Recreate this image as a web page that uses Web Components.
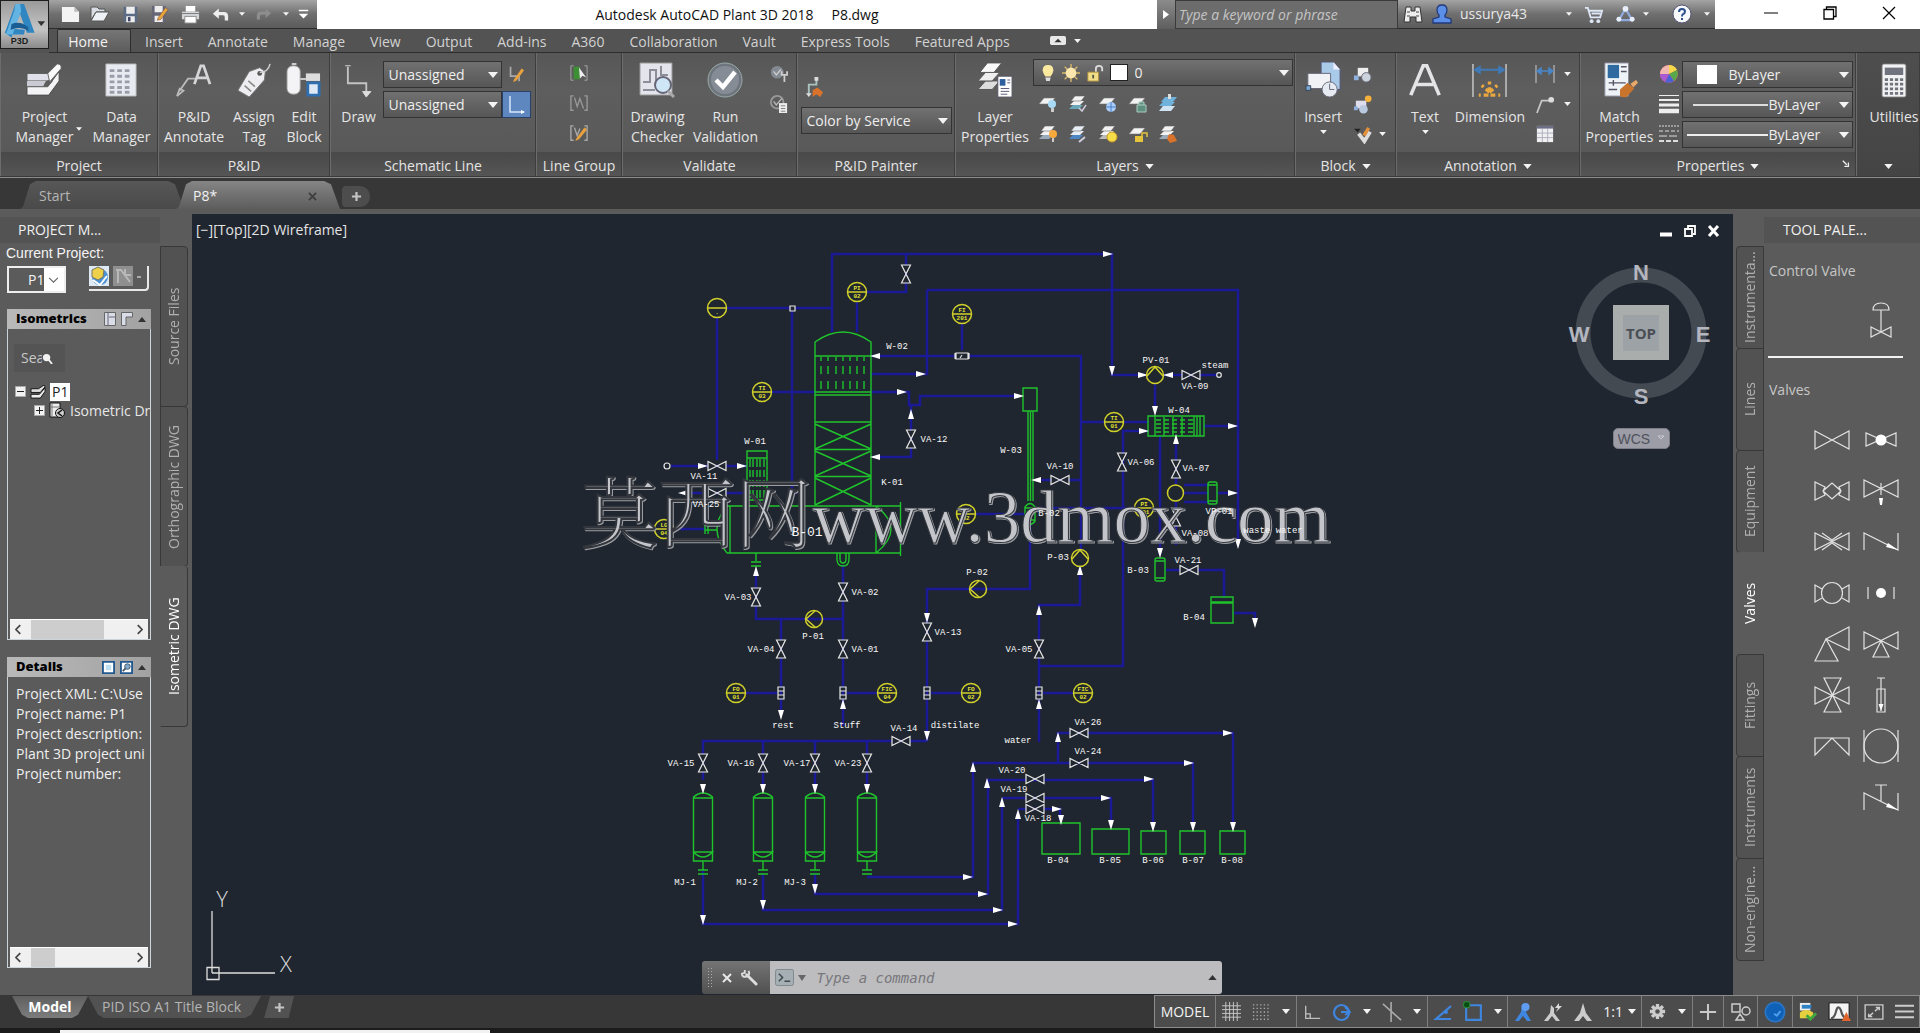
<!DOCTYPE html>
<html lang="en">
<head>
<meta charset="utf-8">
<title>Autodesk AutoCAD Plant 3D 2018 - P8.dwg</title>
<style>
html,body{margin:0;height:100%;overflow:hidden}
body{background:#5b5b5b;color:#e8e8e8;font:14px/20px "Open Sans","Noto Sans",sans-serif}
</style>
</head>
<body>
<cad-app></cad-app>
<script>
/* ---------- icon library ---------- */
const LAYER = (c = '#f2f2f2', d = '#9ab') => `<path d="M5 12h10l-4 4H1z" fill="${d}"/><path d="M6 8h10l-4 4H2z" fill="${c}"/><path d="M7 3h10l-4 5H3z" fill="${c}" stroke="#666" stroke-width=".6"/>`;
const SHEET = `<path d="M6 5h11l-5 6H1z" fill="#f2f2f2" stroke="#777" stroke-width=".6"/>`;
const ICONS = {
  logo: ['0 0 49 49', `<path d="M4 33 15 3h9l11 30h-8l-8-22-7 18 13 1-1 5H12l-1 3z" fill="#2f86c0"/><path d="m15 3 5 0 1 8-9 24H5l9-25z" fill="#63b4e2"/><path d="M11 24q9-4 17 3l1 4q-9-5-19-1z" fill="#1a5d94"/><path d="M38 21h8l-4 5z" fill="#333"/>`],
  new: ['0 0 20 20', `<path d="M1 2h13l5 5v11H1z" fill="#f4f4f4"/><path d="M14 2v5h5z" fill="#bbb"/>`],
  open: ['0 0 20 20', `<path d="M1 16V3h6l2 2h6v3H6z" fill="#d8dde3" stroke="#555"/><path d="m1 17 5-9h13l-5 9z" fill="#eef1f5" stroke="#555"/>`],
  save: ['0 0 20 20', `<path d="M2 1h16v18H2z" fill="#5b6b84"/><path d="M5 1h10v8H5zM5 12h10v7H5z" fill="#eee"/><path d="M7 13h3v5H7z" fill="#446"/>`],
  saveas: ['0 0 20 20', `<path d="M1 1h15v18H1z" fill="#667"/><path d="M4 1h9v7H4zM4 12h9v7H4z" fill="#eee"/><path d="m8 14 8-11 3 2-8 11-4 1z" fill="#e8a73a" stroke="#744" stroke-width=".6"/>`],
  print: ['0 0 20 20', `<path d="M5 1h10v6H5z" fill="#fff"/><path d="M1 7h18v8H1z" fill="#d4d7da"/><path d="M4 12h12v7H4z" fill="#fff" stroke="#888"/><path d="M1 9h18" stroke="#777"/>`],
  undo: ['0 0 20 20', `<path d="m1 9 7-6v4h6q5 0 5 5v5h-4v-4q0-2-2-2H8v4z" fill="#eee"/>`],
  redo: ['0 0 20 20', `<path d="m19 9-7-6v4H6q-5 0-5 5v5h4v-4q0-2 2-2h5v4z" fill="#8d8d8d"/>`],
  caret: ['0 0 10 6', `<path d="M0 0h10L5 6z" fill="#f4f4f4"/>`],
  custom: ['0 0 14 14', `<path d="M1 1h12v2H1zM1 6h12l-6 6z" fill="#fff"/>`],
  right: ['0 0 8 12', `<path d="m0 0 8 6-8 6z" fill="#fff"/>`],
  bino: ['0 0 20 20', `<path d="M3 3h5v4h4V3h5l2 15h-6v-5H7v5H1z" fill="#eee" stroke="#333"/><path d="M4 8h3M13 8h3M4 12h3M13 12h3" stroke="#444"/>`],
  user: ['0 0 20 20', `<path d="M10 1q5 0 5 5 0 3-2 5v2l6 2v4H1v-4l6-2v-2q-2-2-2-5 0-5 5-5z" fill="#5b8fe8" stroke="#223a7a" stroke-width="1.3"/>`],
  cart: ['0 0 20 20', `<path d="M1 3h3l3 10h10l2-7H5M8 9h9" fill="none" stroke="#dde6f5" stroke-width="2"/><circle cx="8" cy="17" r="2" fill="#dde6f5"/><circle cx="15" cy="17" r="2" fill="#dde6f5"/>`],
  a360: ['0 0 20 20', `<path d="M10 4 3 16h14z" fill="none" stroke="#8fa9dd" stroke-width="2.4"/><circle cx="10" cy="4" r="3" fill="#e8eefc"/><circle cx="3" cy="15" r="2.6" fill="#e8eefc"/><circle cx="17" cy="15" r="2.6" fill="#e8eefc"/>`],
  help: ['0 0 20 20', `<circle cx="10" cy="10" r="9" fill="#f6f8fb" stroke="#557"/><path d="M7 8q0-3 3-3t3 2.600q0 1.700-2 2.600-1 .5-1 2.300M10 14v2" fill="none" stroke="#2d4f8e" stroke-width="2"/>`],
  min: ['0 0 14 14', `<path d="M0 7h14" stroke="#000"/>`],
  max: ['0 0 14 14', `<path d="M1 3.500h9.500v9.500H1zM3.500 3V1H13v9.500h-2" fill="none" stroke="#000" stroke-width="1.300"/>`],
  close: ['0 0 14 14', `<path d="m1 1 12 12M13 1 1 13" stroke="#000" stroke-width="1.200"/>`],
  pill: ['0 0 18 10', `<rect width="18" height="10" rx="2" fill="#e8e8e8"/><path d="m5 7 4-4 4 4z" fill="#333"/>`],
  project: ['0 0 40 36', `<path d="M2 25h22l12-16v10L25 34H2z" fill="#f3f3f6" stroke="#4a4a4a"/><path d="M2 11h22q4 0 4 4-1 4-5 4H2z" fill="#dfe0ea" stroke="#555"/><path d="M24 11 34 1q5 0 4 5L26 20z" fill="#fafafa" stroke="#666"/><path d="M2 19h20l-3 6H2z" fill="#c9cad4"/><path d="M2 25h22l5-6" fill="none" stroke="#666"/>`],
  data: ['0 0 34 36', `<path d="M1 1h32v34H1z" fill="#e8eaf2" stroke="#bbb"/><path d="M5 8h24M5 14h24M5 20h24M5 26h24M5 31h24" stroke="#9a9ca8" stroke-width="3" stroke-dasharray="5 3"/>`],
  annotate: ['0 0 40 36', `<path d="M2 35 5 27l4 2zM5 29l9-13h8" fill="none" stroke="#bbb" stroke-width="2"/><path d="m21 22 7-20h3l7 20M24 15h11" fill="none" stroke="#d5d5d8" stroke-width="3"/>`],
  tag: ['0 0 38 36', `<path d="M14 9 25 5l6 4-1 9-16 18L2 29z" fill="#eeeef2" stroke="#777"/><circle cx="25" cy="11" r="2.500" fill="#555"/><path d="M25 10q9 0 11-9" fill="none" stroke="#ccc" stroke-width="1.600"/><path d="m9 24 7 6M13 19l7 6" stroke="#888" stroke-width="1.600"/>`],
  block: ['0 0 38 36', `<rect x="1" y="3" width="14" height="30" rx="6" fill="#f4f4f6" stroke="#999"/><path d="M6 1h5M15 17h6" stroke="#ccc" stroke-width="2"/><path d="M21 11h15v8H21z" fill="#ddd"/><path d="M23 21h12v13H23z" fill="#dfe8f5" stroke="#2f6fb0" stroke-width="3"/>`],
  draw: ['0 0 30 38', `<path d="M4 4v18h20v11" fill="none" stroke="#c4c4c4" stroke-width="2"/><path d="M1 3h6M20 31h9l-5 6z" stroke="#ddd" stroke-width="1" fill="#ddd"/>`],
  pencilLine: ['0 0 20 20', `<path d="M3 1v11h10v6" stroke="#aaa" fill="none" stroke-width="2"/><path d="m7 16 9-13 3 2-9 12-4 2z" fill="#e9a13d"/>`],
  ell: ['0 0 22 22', `<path d="M5 2v16h14" stroke="#d7e6fb" stroke-width="1.500" fill="none"/><path d="m16 16 4 2-4 2z" fill="#fff"/>`],
  grp1: ['0 0 20 20', `<path d="M4 2H1v16h3M16 2h3v16h-3" stroke="#aaa" fill="none"/><path d="M4 3h7v14H4z" fill="#3c8f34"/><path d="m10 4 1 12 3-3 4 2z" fill="#eee"/>`],
  grp2: ['0 0 20 20', `<path d="M4 2H1v16h3M16 2h3v16h-3M5 4l3 10 3-9 4 11" stroke="#999" fill="none" stroke-width="1.500"/>`],
  grp3: ['0 0 20 20', `<path d="M4 2H1v16h3M16 2h3v16h-3M5 4l3 9 3-8" stroke="#aaa" fill="none" stroke-width="1.500"/><path d="m7 16 9-12 3 2-9 11-4 2z" fill="#e9a13d"/>`],
  checker: ['0 0 36 36', `<path d="M1 1h32v32H1z" fill="#e4e5ec" stroke="#999"/><path d="M4 20h7V8h6v18M22 4v9h7M4 28h12" fill="none" stroke="#8c8e9a" stroke-width="2"/><circle cx="24" cy="23" r="8" fill="#cfe6f7" stroke="#667" stroke-width="2"/><path d="m29 29 6 6" stroke="#aaa" stroke-width="3"/>`],
  run: ['0 0 36 36', `<circle cx="18" cy="18" r="17" fill="#6f757c" stroke="#9aa"/><circle cx="18" cy="18" r="14" fill="#858c96"/><path d="m9 18 7 7L28 10" fill="none" stroke="#fff" stroke-width="4.500"/>`],
  valset: ['0 0 20 20', `<circle cx="8" cy="8" r="7" fill="#848a92"/><path d="m4 7 3 4 5-6" stroke="#ccc" fill="none" stroke-width="1.500"/><path d="M16 11v8M13 7v4h6V7" stroke="#ccc" stroke-width="2" fill="none"/>`],
  vallist: ['0 0 20 20', `<circle cx="8" cy="8" r="7" fill="none" stroke="#999" stroke-width="2"/><path d="m4 7 3 4 6-7" stroke="#bbb" fill="none" stroke-width="1.500"/><path d="M10 9h9v11h-9z" fill="#eee"/><path d="M12 12h5M12 15h5M12 18h5" stroke="#777"/>`],
  painter: ['0 0 20 22', `<path d="M12 1v7H4v10" fill="none" stroke="#a9c4bd" stroke-width="2"/><path d="M10 0h4v4h-4zM1 17h6l-3 4z" fill="#ddd"/><path d="m8 14 5-3 6 5-3 5-4-3-4 3z" fill="#d9732c"/>`],
  layerprops: ['0 0 38 38', `<path d="M9 20h15l-8 9H1z" fill="#ddd" stroke="#555"/><path d="M9 11h15l-8 9H1z" fill="#eee" stroke="#555"/><path d="M11 1h15l-8 10H3z" fill="#fafafa" stroke="#555"/><path d="M22 15h15v22H22z" fill="#fff" stroke="#556"/><path d="M24 18h6v7h-6z" fill="#2d5f9e"/><path d="M32 19h3M32 22h3M25 28h9M25 31h9M25 34h7" stroke="#557"/>`],
  bulb: ['0 0 18 20', `<path d="M9 1q6 0 6 6 0 3-3 7H6Q3 10 3 7q0-6 6-6z" fill="#fbe9a0"/><path d="M6 15h6l-1 4H7z" fill="#ddd"/>`],
  sun: ['0 0 20 20', `<path d="M10 0v20M0 10h20M3 3l14 14M17 3 3 17" stroke="#d9b968" stroke-width="1.500"/><circle cx="10" cy="10" r="6" fill="#fbe7ae"/>`],
  unlock: ['0 0 20 20', `<path d="M11 9V5q0-3 3.500-3T18 5v3" fill="none" stroke="#ddd" stroke-width="2"/><path d="M2 9h12v10H2z" fill="#f2dc86" stroke="#a98b3a"/><path d="M8 12v4" stroke="#554" stroke-width="2"/>`],
  l1: ['0 0 20 20', SHEET + `<circle cx="14" cy="11" r="4" fill="#a9dbf5"/><path d="M13 15h3v4h-3z" fill="#ccc"/>`],
  l2: ['0 0 20 20', LAYER('#f2f2f2', '#69a7b8') + `<path d="m11 15 3 3 4-6" stroke="#ccd" stroke-width="1.500" fill="none"/>`],
  l3: ['0 0 20 20', SHEET + `<circle cx="13" cy="14" r="5" fill="#a9cdf8"/><path d="M13 9v10M8 14h10" stroke="#4c7fc8"/>`],
  l4: ['0 0 20 20', SHEET + `<path d="M9 12h9v7H9zM11 12V9h5v3" fill="#5f8f7f" stroke="#a9cdbf"/>`],
  l5: ['0 0 20 20', `<path d="M5 13h12l-4 5H1z" fill="#cfe3f2"/><path d="M5 9h12l-4 4H1zM7 4h12l-4 5H3z" fill="#6fb2dc"/><path d="M10 1h3v5h-3z" fill="#ddd"/>`],
  l6: ['0 0 20 20', LAYER() + `<circle cx="15" cy="11" r="4" fill="#f6a93c"/><path d="M14 15h2v4h-2z" fill="#ccc"/>`],
  l7: ['0 0 20 20', LAYER('#e8eef5', '#4d86c4') + `<path d="m11 19 6-5" stroke="#ccd" stroke-width="2"/>`],
  l8: ['0 0 20 20', LAYER('#f2f2f2', '#bbb') + `<circle cx="14" cy="14" r="5" fill="#f7dc4a" stroke="#c99b22"/>`],
  l9: ['0 0 20 20', SHEET + `<path d="M7 13h8v6H7z" fill="#e6c33c"/><path d="M14 13v-3h5v4" fill="none" stroke="#e6c33c" stroke-width="1.500"/>`],
  l10: ['0 0 20 20', LAYER() + `<path d="m11 11 5 1 3 6-7 2-3-4z" fill="#d9732c"/>`],
  insert: ['0 0 38 40', `<path d="M17 1h13l7 8v21H17z" fill="#a9cbe9" stroke="#557"/><path d="M30 1v8h7z" fill="#eef"/><path d="M3 13h24v16H3z" fill="#f0f2f6" stroke="#667"/><circle cx="26" cy="30" r="8" fill="#e6ebf2" stroke="#667"/><path d="M26 24v6h5" stroke="#667" fill="none"/><path d="M1 26h5v5H1z" fill="#7ea6d4" stroke="#345"/>`],
  b1: ['0 0 20 20', `<path d="M5 3h11v9H5z" fill="#eee"/><path d="M1 11h5v5H1z" fill="#8fb0dd"/><circle cx="14" cy="13" r="5" fill="#ccd3dd" stroke="#667"/>`],
  b2: ['0 0 20 20', `<path d="M3 6h11v8H3z" fill="#dde"/><path d="M1 12h4v4H1z" fill="#8fb0dd"/><circle cx="11" cy="15" r="4.500" fill="#b9c9e0"/><circle cx="16" cy="4" r="3.500" fill="#f5b23a"/>`],
  b3: ['0 0 20 20', `<path d="M1 4h7l-3 4z" fill="#222"/><path d="m6 9 6 8 6-10" stroke="#ddd" stroke-width="4" fill="none"/><path d="m10 10 5-8 3 2-5 8z" fill="#e3913a"/>`],
  text: ['0 0 36 36', `<path d="M2 35 16 2h4l14 33M8 23h20" fill="none" stroke="#e4e4e6" stroke-width="4"/>`],
  dim: ['0 0 36 36', `<path d="M1 1v34M35 1v34" stroke="#c8c8c8" stroke-width="1.500"/><path d="M3 7h30M3 7l5-3v6zM33 7l-5-3v6z" stroke="#3f79b6" stroke-width="2" fill="#3f79b6"/><path d="M18 30V19M18 30l-8-7M18 30l8-7M17 33H7M19 33h10" stroke="#e9a73e" stroke-width="3.500" stroke-dasharray="5 3"/>`],
  dim2: ['0 0 20 20', `<path d="M1 1v18M19 1v18" stroke="#ccc"/><path d="M2 7h16M2 7l4-3v6zM18 7l-4-3v6z" stroke="#4a86c6" fill="#4a86c6" stroke-width="1.500"/>`],
  leader: ['0 0 20 20', `<path d="m1 19 5-13h8" stroke="#c8c8c8" fill="none" stroke-width="1.800"/><circle cx="16" cy="5" r="3" fill="#ddd"/>`],
  table: ['0 0 20 20', `<path d="M1 1h18v18H1z" fill="#f0f0f2"/><path d="M1 1h18v3H1z" fill="#6c6f86"/><path d="M1 9h18M1 14h18M7 4v15M13 4v15" stroke="#aab"/>`],
  match: ['0 0 38 38', `<path d="M3 1h25v35H3z" fill="#eef3f7" stroke="#889"/><path d="M6 3h12v14H6z" fill="#2f6aa0"/><path d="M20 5h6M20 10h6M7 22h18M7 29h9M12 19v6" stroke="#556" stroke-width="1.500"/><path d="m19 29 8-7 7 6-8 9q-4 1-7-1z" fill="#c8742c"/><path d="m30 23 6-4 2 3-5 5z" fill="#e8a86a"/>`],
  wheel: ['0 0 20 20', `<circle cx="10" cy="10" r="9" fill="#e95f4f"/><path d="M10 10V1a9 9 0 0 1 8 5z" fill="#f5d94a"/><path d="M10 10 18 6a9 9 0 0 1-3 11z" fill="#58a94c"/><path d="M10 10l5 7a9 9 0 0 1-9 1z" fill="#4b62d6"/><path d="M10 10 6 18A9 9 0 0 1 1 10z" fill="#a95ad0"/><path d="M10 10H1a9 9 0 0 1 9-9z" fill="#f0b6b0"/>`],
  lw: ['0 0 20 20', `<path d="M0 1.500h20" stroke="#eee"/><path d="M0 6h20" stroke="#eee" stroke-width="2"/><path d="M0 11h20" stroke="#eee" stroke-width="3"/><path d="M0 17h20" stroke="#eee" stroke-width="4.500"/>`],
  lt: ['0 0 20 20', `<path d="M0 2h20" stroke="#ddd" stroke-dasharray="2 1"/><path d="M0 7h20" stroke="#ddd" stroke-dasharray="4 2"/><path d="M0 12h20" stroke="#ddd" stroke-dasharray="8 2"/><path d="M0 17h20" stroke="#ddd" stroke-width="2" stroke-dasharray="5 2"/>`],
  calc: ['0 0 28 38', `<rect x="1" y="1" width="26" height="36" rx="2" fill="#f2f2f4" stroke="#777"/><path d="M4 5h20v8H4z" fill="#71747e"/><path d="M4 18h20M4 23h20M4 28h20M4 33h20" stroke="#70737c" stroke-width="3" stroke-dasharray="3.500 2"/>`],
  launch: ['0 0 10 10', `<path d="M1 1l5 5M8 3v5H3" stroke="#eee" stroke-width="1.600" fill="none"/>`],
  globe: ['0 0 20 20', `<path d="M0 0h20v20H0z" fill="#dfe9f4"/><circle cx="11" cy="11" r="8" fill="#4c92d4"/><path d="M3 4 9 1l6 3-1 7-5 3-6-3z" fill="#eed04a" stroke="#776"/><path d="m4 14 7 5 7-9" stroke="#fff" stroke-width="2" fill="none"/>`],
  iso: ['0 0 20 20', `<path d="M0 0h20v20H0z" fill="#8f8f8f"/><path d="M3 4h5l9 12M5 3v14M12 3v6h6" stroke="#b8b8b8" stroke-width="2" fill="none"/>`],
  hdr1: ['0 0 12 14', `<path d="M.5.5h11v13H.5z" fill="#d9dde8" stroke="#666"/><path d="M4 1v12M5 5h6" stroke="#667"/>`],
  hdr2: ['0 0 12 14', `<path d="M.5 13.500V.5h11V5H5v8.500z" fill="#d9dde8" stroke="#666"/>`],
  det1: ['0 0 14 14', `<path d="M1 1h12v12H1z" fill="#fff" stroke="#23598f" stroke-width="2"/><path d="M4 4h6v6H4z" fill="#bfe0f0"/>`],
  det2: ['0 0 14 14', `<path d="M1 1h12v12H1z" fill="#fff" stroke="#23598f" stroke-width="2"/><circle cx="8" cy="6" r="3" fill="#7fa8cc" stroke="#456"/><path d="m3 11 3-3" stroke="#456" stroke-width="2"/>`],
  up: ['0 0 10 6', `<path d="m0 6 5-6 5 6z" fill="#333"/>`],
  mag: ['0 0 12 12', `<circle cx="5" cy="5" r="4" fill="#f2f2f2"/><path d="m7 7 4 5" stroke="#f2f2f2" stroke-width="2"/>`],
  minus: ['0 0 11 11', `<path d="M.5.5h10v10H.5z" fill="#f2f2f2" stroke="#aaa"/><path d="M2 5.500h7" stroke="#222"/>`],
  plusbox: ['0 0 11 11', `<path d="M.5.5h10v10H.5z" fill="#f2f2f2" stroke="#aaa"/><path d="M2 5.500h7M5.500 2v7" stroke="#222"/>`],
  ptree: ['0 0 17 15', `<path d="M1 10h9l6-7v4l-5 7H1z" fill="#eee" stroke="#111"/><path d="M1 4h8l6-4 1 2-5 6H1z" fill="#ddd" stroke="#111"/>`],
  dtree: ['0 0 17 17', `<path d="M1 1h10v14H1z" fill="#eee" stroke="#111"/><path d="M3 2v12M1 5h9" stroke="#777"/><circle cx="11" cy="11" r="4.500" fill="#ccc" stroke="#111"/><path d="m13 8-4 3 4 3" stroke="#111" fill="none" stroke-width="1.500"/>`],
  chl: ['0 0 8 12', `<path d="M6 1 1 6l5 5" stroke="#444" stroke-width="2" fill="none"/>`],
  chr: ['0 0 8 12', `<path d="m2 1 5 5-5 5" stroke="#444" stroke-width="2" fill="none"/>`],
  chd: ['0 0 12 8', `<path d="m1 1 5 5 5-5" stroke="#666" stroke-width="1.300" fill="none"/>`],
  x: ['0 0 10 10', `<path d="m1 1 8 8M9 1 1 9" stroke="#e8e8e8" stroke-width="2"/>`],
  xd: ['0 0 10 10', `<path d="m1 1 8 8M9 1 1 9" stroke="#3e3e3e" stroke-width="2"/>`],
  plus: ['0 0 12 12', `<path d="M6 1v10M1 6h10" stroke="#c4c4c4" stroke-width="2.400"/>`],
  wrench: ['0 0 18 18', `<path d="m6 6 10 10" stroke="#ddd" stroke-width="3" stroke-linecap="round"/><path d="M4 1v3l-3 1q0 4 5 3 4-2 2-6" fill="none" stroke="#ddd" stroke-width="2"/>`],
  prompt: ['0 0 20 18', `<rect x=".5" y=".5" width="19" height="17" rx="2" fill="#a5afb4" stroke="#7d878c"/><path d="m4 5 4 4-4 4M10 13h6" stroke="#3d4a50" stroke-width="1.600" fill="none"/>`],
  /* status bar */
  grid: ['0 0 20 20', `<path d="M0 4h20M0 8h20M0 12h20M0 16h20M4 0v20M8 0v20M12 0v20M16 0v20" stroke="#c9c9c9"/>`],
  dots: ['0 0 20 20', `<path d="M1 2h18M1 6h18M1 10h18M1 14h18M1 18h18" stroke="#aaa" stroke-width="1.500" stroke-dasharray="1.500 2.500"/>`],
  ortho: ['0 0 20 20', `<path d="M3 3v14h16M3 12h5v5" fill="none" stroke="#bdbdbd" stroke-width="1.500"/>`],
  polar: ['0 0 20 20', `<circle cx="9.500" cy="10.500" r="7.500" fill="none" stroke="#3f86e0" stroke-width="2.200"/><path d="M9 10h9M13 5l5 5-5 3" fill="none" stroke="#3f86e0" stroke-width="1.800"/>`],
  isod: ['0 0 22 22', `<path d="m1 2 20 18M10 0v22" stroke="#a9a9a9" stroke-width="1.800"/>`],
  otrack: ['0 0 20 20', `<path d="M18 4 3 17h15" fill="none" stroke="#3f86e0" stroke-width="2.200"/><circle cx="13" cy="10" r="2" fill="#3f86e0"/>`],
  osnap: ['0 0 20 20', `<path d="M4 4h13v14H3V4" fill="none" stroke="#3f86e0" stroke-width="2"/><circle cx="3.500" cy="3.500" r="3" fill="#0a4d12" stroke="#2b8a3a"/>`],
  annB: ['0 0 20 20', `<path d="m2 19 6-9 1-8 6 2-2 6 5 9h-4l-4-5-4 5z" fill="#3f86e0"/><circle cx="12.500" cy="5" r="4" fill="#5f9df0"/>`],
  annP: ['0 0 20 20', `<path d="m1 19 6-8 1-8 3 3v5l6 8h-4l-4-5-4 5z" fill="#ccc"/><path d="m16 1-4 5h3l-2 4 6-6h-3z" fill="#ddd"/>`],
  ann: ['0 0 20 20', `<path d="m1 19 6-8 3-10 3 10 6 8h-5l-4-5-4 5z" fill="#ccc"/>`],
  gear: ['0 0 20 20', `<path d="M10 2v16M2 10h16M4.300 4.300l11.400 11.400M15.700 4.300 4.300 15.700" stroke="#ccc" stroke-width="3.500"/><circle cx="10" cy="10" r="5.500" fill="#ccc"/><circle cx="10" cy="10" r="2.400" fill="#505050"/>`],
  plusL: ['0 0 20 20', `<path d="M10 1v18M1 10h18" stroke="#c9c9c9" stroke-width="2.200"/>`],
  shapes: ['0 0 20 20', `<path d="M1 2h8v8H1zM5 18l4-6 4 6z" fill="none" stroke="#ccc" stroke-width="1.500"/><circle cx="15" cy="9" r="4" fill="none" stroke="#ccc" stroke-width="1.500"/>`],
  blue: ['0 0 24 24', `<circle cx="12" cy="12" r="10.500" fill="#0f61b8" stroke="#2a74c4" stroke-width="2"/><path d="m11 14 3 2 4-5" stroke="#4fa0ee" stroke-width="2" fill="none"/>`],
  sync: ['0 0 20 20', `<path d="M2 1h11v8H2z" fill="#eee"/><path d="M4 3h10v4H4z" fill="#2f82c4"/><path d="M2 11q6-5 14 0v6H2z" fill="#e6cf3e"/><path d="m9 14 4 4 6-6" stroke="#3fa83f" stroke-width="3" fill="none"/>`],
  graph: ['0 0 26 22', `<path d="M1 1h22v18H1z" fill="#f4f4f4" stroke="#111"/><path d="M3 18q4 0 6-9 2-6 5 0 2 9 7 9" fill="none" stroke="#555" stroke-width="2.400"/><path d="m20 11 5 10H15z" fill="#e0642c"/>`],
  full: ['0 0 22 18', `<path d="M1 1h20v16H1z" fill="none" stroke="#ccc" stroke-width="1.500"/><path d="M12 8l5-4M13 4h4v3M10 10l-5 4M5 11v3h4" stroke="#ccc" stroke-width="1.600" fill="none"/>`],
  menu: ['0 0 20 20', `<path d="M0 4h20M0 10h20M0 16h20" stroke="#ccc" stroke-width="2.200"/>`],
  /* valve palette */
  vc: ['0 0 22 36', `<path d="M3 8q0-7 8-7t8 7zM11 8v22M1 25l20 10V25L1 35z" class="v"/>`],
  v1: ['0 0 36 36', `<path d="M1 9v18L35 9v18z" class="v"/>`],
  v2: ['0 0 36 36', `<path d="M3 11v13l30-13v13z" class="v"/><circle cx="18" cy="18" r="5.500" fill="#fff"/>`],
  v3: ['0 0 36 36', `<path d="M1 9v18l10-5-2-4 9-8 9 8-2 4 10 5V9l-10 5 2 4-9 8-9-8 2-4z" class="v"/>`],
  v4: ['0 0 36 36', `<path d="M1 7v17L35 7v17zM18 10v12" class="v"/><path d="M16 25h4l-1 7h-2z" fill="#fff"/>`],
  v5: ['0 0 36 36', `<path d="M1 9v17L35 9v17zM8 9l10 7 10-7M8 26l10-7 10 7" class="v"/>`],
  v6: ['0 0 36 36', `<path d="M1 26V9l34 17V9" class="v"/><path d="m25 19 10 7-12-3z" fill="#fff"/>`],
  v7: ['0 0 36 36', `<circle cx="18" cy="18" r="10.500" class="v"/><path d="M8 14 1 10v17l7-4M28 14l7-4v17l-7-4" class="v"/>`],
  v8: ['0 0 36 36', `<path d="M5 12v12M31 12v12" class="v"/><circle cx="18" cy="18" r="5" fill="#fff"/>`],
  v9: ['0 0 36 36', `<path d="M1 35 12 13l12 22zM12 13 35 1v23z" class="v"/>`],
  v10: ['0 0 36 36', `<path d="M1 6v17L35 6v17zM18 15l-8 16h16z" class="v"/>`],
  v11: ['0 0 36 36', `<path d="M1 10v17l34-17v17zM10 1h17L10 35h17z" class="v"/>`],
  v12: ['0 0 36 36', `<path d="M14 1h8M18 1v33M14 12h8v23h-8z" class="v"/><path d="M15.500 27h5l-2.500 7z" fill="#fff"/>`],
  v13: ['0 0 36 36', `<path d="M1 27V10h34v17L18 10z" class="v"/>`],
  v14: ['0 0 36 36', `<circle cx="18" cy="18" r="17" class="v"/><path d="M1 2v32M35 2v32" class="v"/>`],
  v15: ['0 0 36 36', `<path d="M1 31V14l34 17V14M12 6h12M18 6v16" class="v"/><path d="m25 24 10 7-12-3z" fill="#fff"/>`]
};
customElements.define('cad-icon', class extends HTMLElement {
  connectedCallback() {
    if (this.shadowRoot) return;
    const [box, art] = ICONS[this.getAttribute('name')];
    const [, , bw, bh] = box.split(' ').map(Number);
    const w = +(this.getAttribute('w') || bw), h = Math.round(w * bh / bw);
    this.attachShadow({mode: 'open'}).innerHTML = `<style>:host{display:inline-flex;flex:none}svg{display:block}.v{fill:none;stroke:#e2e2e2;stroke-width:1.200}</style><svg aria-hidden="true" width="${w}" height="${h}" viewBox="${box}">${art}</svg>`;
  }
});

const RESET = `*{box-sizing:border-box}button,select,input{font:inherit;color:inherit;background:none;border:0;margin:0;padding:0;border-radius:0}button{display:flex;align-items:center;justify-content:center}select{appearance:none}`;
const define = (name, css, html) => customElements.define(name, class extends HTMLElement {
  connectedCallback() {
    if (!this.shadowRoot) this.attachShadow({mode: 'open'}).innerHTML = `<style>${RESET}${css}</style>${typeof html === 'function' ? html(this) : html}`;
  }
});
const ic = (n, w) => `<cad-icon name="${n}"${w ? ` w="${w}"` : ''}></cad-icon>`;
const ib = (n, label, w, cls = '') => `<button class="${cls}" aria-label="${label}">${ic(n, w)}</button>`;

/* ---------- header ---------- */
define('cad-header', `
:host{display:grid;grid-template:29px 24px/49px 1fr;background:#535353}
.app{grid-row:1/3;height:49px;background:linear-gradient(#9a9a9a,#c4c4c4 60%,#8a8a8a);border:1px solid #1e1e1e;flex-direction:column;align-items:stretch;justify-content:flex-start;position:relative}
.app span{position:absolute;left:0;right:10px;bottom:1px;font:bold 9px/12px "Liberation Sans",sans-serif;color:#1d1d1d;text-align:center}
.top{display:flex;min-width:0}
.qat,.info{background:linear-gradient(#a4a4a4,#6f6f6f 50%,#5b5b5b);border-bottom:1px solid #2c2c2c;display:flex;align-items:center}
.qat{flex:0 0 268px;padding-left:6px}
.qat button{width:30px;height:27px}.qat .c{width:14px}.qat .c2{width:20px}
.title{flex:1;background:#fff;color:#111;display:flex;align-items:center;justify-content:center;gap:18px;white-space:nowrap;font-size:14px}
.more{width:18px;background:linear-gradient(#8b8b8b,#5e5e5e)}
input{width:223px;background:#6c6c6c;border:1px solid #3a3a3a;padding-left:3px;font-style:italic;color:#ddd}
input::placeholder{color:#c4c4c4;opacity:1}
.info{flex:0 0 317px}
.info button{height:27px}
.u{gap:8px}
.hp{width:60px;gap:12px;justify-content:flex-start;padding-left:17px}
.win{flex:0 0 205px;background:#fff;display:flex;padding-left:26px}
.win button{width:59px;padding-bottom:3px}
nav{display:flex;padding-left:8px;align-items:stretch;border-bottom:1px solid #2d2d2d;color:#d2d2d2}
nav button{padding:2px 13px 0 12px}
nav button.on{width:74px;margin-right:2px;padding:2px 12px 0 0;background:linear-gradient(#767676,#5c5c5c);border:1px solid #2d2d2d;border-bottom:0;border-radius:2px 2px 0 0;color:#f2f2f2}
nav .p{padding:0 0 0 27px}nav .q{padding:0 8px}
`, `
<button class="app" aria-label="Application menu">${ic('logo', 47)}<span>P3D</span></button>
<div class="top"><div class="qat">
${ib('new', 'New', 19)}${ib('open', 'Open', 20)}${ib('save', 'Save', 17)}${ib('saveas', 'Save as', 18)}${ib('print', 'Plot', 19)}${ib('undo', 'Undo', 17)}${ib('caret', 'Undo list', 6, 'c')}${ib('redo', 'Redo', 16)}${ib('caret', 'Redo list', 6, 'c')}${ib('custom', 'Customize', 11, 'c2')}
</div>
<div class="title"><span>Autodesk AutoCAD Plant 3D 2018</span><span>P8.dwg</span></div>
<button class="more" aria-label="Search options">${ic('right', 6)}</button>
<input aria-label="Search help" placeholder="Type a keyword or phrase">
<div class="info">
<button style="width:30px" aria-label="Search">${ic('bino', 20)}</button>
<button style="width:100px;justify-content:flex-start;padding-left:4px" class="u">${ic('user', 20)}ussurya43</button>
<button style="width:50px;justify-content:flex-end;padding-right:6px" aria-label="Account menu">${ic('caret', 6)}</button>
<button style="width:31px" aria-label="Store">${ic('cart', 19)}</button>
<button style="width:46px;gap:8px" aria-label="App network">${ic('a360', 19)}${ic('caret', 6)}</button>
<button class="hp" aria-label="Help">${ic('help', 20)}${ic('caret', 6)}</button>
</div>
<div class="win">${ib('min', 'Minimize', 14)}${ib('max', 'Restore', 14)}${ib('close', 'Close', 14)}</div></div>
<nav>${['Home', 'Insert', 'Annotate', 'Manage', 'View', 'Output', 'Add-ins', 'A360', 'Collaboration', 'Vault', 'Express Tools', 'Featured Apps'].map((t, i) => `<button${i ? '' : ' class="on"'}>${t}</button>`).join('')}${ib('pill', 'Ribbon display', 16, 'p')}${ib('caret', 'Ribbon options', 7, 'q')}</nav>`);

/* ---------- ribbon ---------- */
define('ribbon-panel', `
:host{display:flex;flex-direction:column;min-width:0;border-right:1px solid #3d3d3d;border-left:1px solid #6c6c6c;background:linear-gradient(#575757,#5e5e5e 30%,#595959 80%,#494949 81%,#555)}
.body{flex:1;display:flex;min-height:0;justify-content:center}
footer{height:23px;display:flex;align-items:center;justify-content:center;gap:6px;white-space:nowrap;padding-top:3px;color:#e4e4e4;position:relative}
.l{position:absolute;right:5px;top:7px;display:flex}
`, el => `<div class="body"><slot></slot></div><footer>${el.getAttribute('label')}${el.hasAttribute('more') ? ic('caret', 9) : ''}${el.hasAttribute('launch') ? `<span class="l">${ic('launch', 8)}</span>` : ''}</footer>`);

define('ribbon-button', `
:host{display:flex;justify-content:center;flex:none}
button{flex-direction:column;justify-content:flex-start;padding-top:9px;line-height:20px;color:#e6e6e6;position:relative}
.i{height:45px;display:flex;align-items:center;justify-content:center;padding-bottom:9px}
.s{height:18px;display:flex;align-items:flex-start;padding-top:3px}
.r{position:absolute;right:-9px;top:74px;display:flex}
`, el => `<button><span class="i">${ic(el.getAttribute('icon'), el.getAttribute('w'))}</span>${el.getAttribute('label').split('|').map(t => `<span>${t}</span>`).join('')}${el.hasAttribute('more') ? `<span class="s">${ic('caret', 7)}</span>` : ''}${el.hasAttribute('side') ? `<span class="r">${ic('caret', 6)}</span>` : ''}</button>`);

define('ribbon-select', `
:host{display:flex;height:27px;border:1px solid #333;background:linear-gradient(#717171,#565656);align-items:center;position:relative;min-width:0}
.pre{display:flex;align-items:center;flex:none}
select{flex:1;height:25px;padding:0 18px 0 var(--pad,5px);color:#eee;min-width:0}
cad-icon{position:absolute;right:3px;pointer-events:none}
`, el => `<span class="pre"><slot></slot></span><select aria-label="${el.getAttribute('name')}"><option>${el.getAttribute('value')}</option></select>${ic('caret', 10)}`);

define('cad-ribbon', `
:host{display:grid;grid-template-columns:158fr 172fr 206fr 86fr 175fr 158fr 340fr 101fr 184fr 276fr 64fr;height:125px;padding-bottom:1px;border-bottom:1px solid #8b8b8b;background:#3a3a3a;overflow:hidden}
.col{display:flex;flex-direction:column;align-items:center}
.col button{height:30px;width:24px}
.sel{display:flex;flex-direction:column;gap:3px;padding-top:8px}
.on{background:#5f87bf;border:1px solid #28406a}
.grid{display:grid;grid-template-columns:repeat(5,30px);grid-auto-rows:30px;padding-top:2px}
`, `
<ribbon-panel label="Project"><ribbon-button style="width:82px" icon="project" w="38" label="Project|Manager" side></ribbon-button><ribbon-button style="width:66px;margin-left:3px" icon="data" w="32" label="Data|Manager"></ribbon-button></ribbon-panel>
<ribbon-panel label="P&amp;ID"><ribbon-button style="width:66px" icon="annotate" w="37" label="P&amp;ID|Annotate"></ribbon-button><ribbon-button style="width:54px" icon="tag" w="36" label="Assign|Tag"></ribbon-button><ribbon-button style="width:46px" icon="block" w="36" label="Edit|Block"></ribbon-button></ribbon-panel>
<ribbon-panel label="Schematic Line"><ribbon-button style="width:48px" icon="draw" w="28" label="Draw"></ribbon-button>
<div class="sel"><ribbon-select style="width:119px" name="Line service" value="Unassigned"></ribbon-select><ribbon-select style="width:119px" name="Line size" value="Unassigned"></ribbon-select></div>
<div class="sel"><button style="height:27px;width:30px" aria-label="Edit line">${ic('pencilLine', 17)}</button><button class="on" style="height:27px;width:29px" aria-label="Orthogonal line">${ic('ell', 22)}</button></div></ribbon-panel>
<ribbon-panel label="Line Group"><div class="col" style="padding-top:5px">${ib('grp1', 'Add to group', 18)}${ib('grp2', 'Remove from group', 18)}${ib('grp3', 'Edit group', 18)}</div></ribbon-panel>
<ribbon-panel label="Validate"><ribbon-button style="width:66px" icon="checker" w="36" label="Drawing|Checker"></ribbon-button><ribbon-button style="width:70px" icon="run" w="36" label="Run|Validation"></ribbon-button><div class="col" style="padding:6px 4px 0 6px">${ib('valset', 'Validation settings', 18)}${ib('vallist', 'Validation summary', 18)}</div></ribbon-panel>
<ribbon-panel label="P&amp;ID Painter"><div style="padding-top:24px"><div style="padding:0 0 9px 4px;display:flex">${ic('painter', 19)}</div><ribbon-select style="width:151px" name="Painter style" value="Color by Service"></ribbon-select></div></ribbon-panel>
<ribbon-panel label="Layers" more><ribbon-button style="width:75px" icon="layerprops" w="36" label="Layer|Properties"></ribbon-button><div style="padding:6px 0 0 0"><ribbon-select style="width:260px;--pad:7px" name="Current layer" value="0"><span style="display:flex;align-items:center;gap:6px;padding-left:6px">${ic('bulb', 16)}${ic('sun', 18)}${ic('unlock', 18)}<span style="width:18px;height:17px;background:#fff;border:1px solid #222"></span></span></ribbon-select><div class="grid">${[1, 2, 3, 4, 5, 6, 7, 8, 9, 10].map(n => ib('l' + n, 'Layer tool ' + n, 20)).join('')}</div></div></ribbon-panel>
<ribbon-panel label="Block" more><ribbon-button style="width:50px" icon="insert" w="36" label="Insert" more></ribbon-button><div class="col" style="padding:6px 3px 0 2px;align-items:flex-start">${ib('b1', 'Create block', 19)}${ib('b2', 'Edit block', 19)}<div style="display:flex;align-items:center">${ib('b3', 'Edit attributes', 19)}<button style="width:16px" aria-label="Attribute list">${ic('caret', 7)}</button></div></div></ribbon-panel>
<ribbon-panel label="Annotation" more><ribbon-button style="width:52px" icon="text" w="32" label="Text" more></ribbon-button><ribbon-button style="width:78px" icon="dim" w="35" label="Dimension"></ribbon-button><div class="col" style="padding:6px 0 0 4px;align-items:flex-start"><div style="display:flex">${ib('dim2', 'Linear', 20)}<button style="width:20px" aria-label="Dimension types">${ic('caret', 7)}</button></div><div style="display:flex">${ib('leader', 'Leader', 19)}<button style="width:20px" aria-label="Leader types">${ic('caret', 7)}</button></div>${ib('table', 'Table', 18)}</div></ribbon-panel>
<ribbon-panel label="Properties" more launch><ribbon-button style="width:72px" icon="match" w="36" label="Match|Properties"></ribbon-button><div class="col" style="padding:6px 1px 0">${ib('wheel', 'Object color', 20)}${ib('lw', 'Lineweight', 20)}${ib('lt', 'Linetype', 20)}</div><div class="sel"><ribbon-select style="width:171px;--pad:12px" name="Color" value="ByLayer"><span style="width:20px;height:19px;background:#fff;margin-left:14px"></span></ribbon-select><ribbon-select style="width:171px;--pad:1px" name="Lineweight" value="ByLayer"><span style="width:75px;height:2px;background:#ddd;margin-left:10px"></span></ribbon-select><ribbon-select style="width:171px;--pad:1px" name="Linetype" value="ByLayer"><span style="width:81px;height:2px;background:#eee;margin-left:4px"></span></ribbon-select></div></ribbon-panel>
<ribbon-panel label="" more style="background:linear-gradient(#4e4e4e,#444)"><ribbon-button icon="calc" w="26" label="Utilities" style="margin-left:12px"></ribbon-button></ribbon-panel>`);

define('file-tabs', `
:host{display:flex;height:31px;background:#373737;padding:3px 0 0 20px;color:#b5b5b5;align-items:stretch}
button{clip-path:polygon(0 100%,3px 92%,10px 12%,16px 0,calc(100% - 16px) 0,calc(100% - 9px) 12%,100% 100%)}
.a{width:164px;background:linear-gradient(#575757,#4a4a4a);justify-content:flex-start;padding:2px 0 0 19px}
.b{width:164px;margin-left:-8px;background:linear-gradient(#858585,#5d5d5d);justify-content:space-between;padding:2px 23px 0 17px;color:#f2f2f2}
.c{width:28px;height:21px;margin:5px 0 0 2px;background:#4d4d4d;border-radius:4px 10px 10px 4px;clip-path:none}
`, `<button class="a">Start</button><button class="b">P8*${ic('xd', 9)}</button><button class="c" aria-label="New drawing">${ic('plus', 11)}</button>`);

/* ---------- side palettes ---------- */
define('side-tabs', `
:host{display:flex;flex-direction:column;width:28px;padding-top:38px}
button{writing-mode:vertical-rl;transform:rotate(180deg);flex:0 1 var(--len);min-height:0;width:100%;background:#525252;border:1px solid #383838;color:#b0b0b0;white-space:nowrap;border-radius:4px 0 0 4px;margin-top:-1px;line-height:24px}
:host([side=right]) button{border-radius:0 4px 4px 0}
button.on{background:#5b5b5b;color:#fff;border-color:#5b5b5b}
:host(:not([side=right])) button.on{border-left-color:#383838;border-top-color:#383838}
`, el => el.getAttribute('tabs').split('|').map(t => `<button${t === el.getAttribute('active') ? ' class="on"' : ''}>${t}</button>`).join(''));

define('project-box', `
:host{display:flex;flex-direction:column;min-height:0;margin-left:7px;width:144px}
header{height:20px;flex:none;background:linear-gradient(90deg,#b9b9b9,#a2a2a2);display:flex;align-items:center;gap:5px;padding:0 5px 0 9px;color:#000;font-weight:700}
header b{flex:1;font-size:13px;padding-bottom:3px}
.box{flex:1;min-height:0;border:1px solid #ccd4da;border-top:0;display:flex;flex-direction:column;overflow:hidden}
.in{flex:1;min-height:0;overflow:hidden}
.bar{height:20px;flex:none;margin:0 2px;background:#f0f0f0;display:flex;align-items:center;padding:0 5px;border-top:1px solid #fff}
.bar i{display:block;height:19px;background:#cdcdcd}
.bar span{flex:1;padding-left:9px}
`, el => { const d = el.getAttribute('label') === 'Details'; return `<header><b>${el.getAttribute('label')}</b>${d ? ic('det1', 13) + ic('det2', 13) : ic('hdr1', 12) + ic('hdr2', 12)}${ic('up', 8)}</header><div class="box"><div class="in"><slot></slot></div><div class="bar"><cad-icon name="chl" w="7"></cad-icon><span><i style="width:${el.getAttribute('thumb')}px"></i></span><cad-icon name="chr" w="7"></cad-icon></div></div>`; });

define('project-manager', `
:host{display:flex;height:100%}
.pal{width:160px;display:flex;flex-direction:column;padding:8px 0 27px}
h2{margin:0;height:26px;background:#535353;font:inherit;line-height:26px;padding-left:18px;color:#f0f0f0}
label{font:14px/20px "Liberation Sans",sans-serif;padding-left:6px;color:#f4f4f4}
.row{display:flex;justify-content:space-between;padding:3px 11px 16px 7px;height:46px}
.cb{width:59px;height:27px;border:2px solid #eee;display:flex;position:relative;background:linear-gradient(90deg,transparent 35px,#fff 35px)}
.cb select{width:100%;padding-left:19px;color:#f4f4f4}
.cb cad-icon{position:absolute;right:5px;top:9px;pointer-events:none}
.tb{width:60px;height:25px;border:solid #e8e8e8;border-width:0 2px 2px 0;border-radius:0 0 4px 0;display:flex;gap:4px;align-items:flex-start;overflow:hidden}
.tb i{width:4px;height:2px;background:#aaa;margin-top:10px}
.s{display:flex;align-items:center;margin:15px 0 10px 6px;width:51px;height:28px;background:#545454;overflow:hidden}
.s input{width:28px;padding-left:7px;color:#ccc}
.s input::placeholder{color:#c8c8c8;opacity:1}
.t{display:flex;align-items:center;gap:4px;height:19px;padding-left:7px;white-space:nowrap}
.t+.t{padding-left:26px}
.t b{font-weight:400;background:#fff;color:#222;line-height:18px;padding:0 2px}
.d{padding:7px 0 0 8px;white-space:nowrap;color:#f0f0f0}
side-tabs{--len:161px}
`, `<div class="pal"><h2>PROJECT M...</h2><label for="cp">Current Project:</label>
<div class="row"><div class="cb"><select id="cp" aria-label="Current Project:"><option>P1</option></select>${ic('chd', 11)}</div><div class="tb">${ic('globe', 20)}${ic('iso', 20)}<i></i></div></div>
<project-box label="Isometrics" thumb="73" style="flex:331 1 0;margin-bottom:17px"><div class="s"><input aria-label="Search" placeholder="Sea">${ic('mag', 11)}</div><div class="t">${ic('minus', 11)}${ic('ptree', 16)}<b>P1</b></div><div class="t">${ic('plusbox', 11)}${ic('dtree', 17)}<span>Isometric Dr</span></div></project-box>
<project-box label="Details" thumb="24" style="flex:311 1 0"><div class="d">Project XML: C:\\Use<br>Project name: P1<br>Project description:<br>Plant 3D project uni<br>Project number:</div></project-box></div>
<side-tabs tabs="Source Files|Orthographic DWG|Isometric DWG" active="Isometric DWG"></side-tabs>`);

define('tool-palettes', `
:host{display:flex;height:100%;padding-left:3px}
.pal{flex:1;padding-top:8px;color:#c6c6c6}
h2{margin:0;height:26px;background:#535353;font:inherit;line-height:26px;padding-left:19px;color:#f0f0f0}
h3{margin:0;font:inherit;padding-left:5px}
.hd{padding-top:18px}
.cv{display:flex;justify-content:flex-end;padding:21px 28px 18px 0}
hr{border:0;height:2px;background:#f2f2f2;margin:0 17px 22px 4px}
.g{display:grid;grid-template-columns:36px 36px;column-gap:13px;row-gap:15px;padding:22px 0 0 50px}
.g button{height:36px}
side-tabs{--len:103px}
`, `<side-tabs side="right" tabs="Instrumenta...|Lines|Equipment|Valves|Fittings|Instruments|Non-engine..." active="Valves"></side-tabs>
<div class="pal"><h2>TOOL PALE...</h2><h3 class="hd">Control Valve</h3><div class="cv">${ib('vc', 'Control valve', 22)}</div><hr><h3>Valves</h3><div class="g">${[1, 2, 3, 4, 5, 6, 7, 8, 9, 10, 11, 12, 13, 14].map(n => ib('v' + n, 'Valve ' + n, 36)).join('')}<span></span>${ib('v15', 'Stop check valve', 36)}</div></div>`);

/* ---------- process diagram ---------- */
const valve = (x, y, h) => h ? `<path class="w" d="M${x - 9} ${y - 4.5}v9l18-9v9z"/>` : `<path class="w" d="M${x - 4.5} ${y - 9}h9l-9 18h9z"/>`;
const TURN = {r: 0, d: 90, l: 180, u: 270};
const arrow = (x, y, d) => `<path class="a" transform="translate(${x} ${y}) rotate(${TURN[d]})" d="M-5-3 5 0-5 3z"/>`;
const text = (x, y, t) => `<text x="${x}" y="${y + 3}">${t}</text>`;
const inst = (x, y, a, b) => `<circle class="y" cx="${x}" cy="${y}" r="9.500"/><path class="y" d="M${x - 9} ${y}h18"/>${a ? `<text class="i" x="${x}" y="${y - 2}">${a}</text>` : ''}<text class="i" x="${x}" y="${y + 6}">${b}</text>`;
const pump = (x, y, d) => `<circle class="y" cx="${x}" cy="${y}" r="8.500"/><path class="y" transform="translate(${x} ${y}) rotate(${TURN[d]})" d="M-1-8 8 0-1 8"/>`;
const meter = (x, y) => `<path class="w" d="M${x - 3} ${y - 6}h6v4h-6zM${x - 3} ${y + 2}h6v4h-6zM${x - 3} ${y - 2}v4M${x + 3} ${y - 2}v4"/>`;
const PIPES = `M832 332V254H1112V375H1148M906 254V292H866M857 302V332M727 308H832M717 318V460M792 310V500M962 324V350M871 356H1081V549M927 290H1238V545M927 290V374H871M772 392H815M871 392H909V405H920V396H1018M911 405V457H873M671 466H747M690 493H747M788 493H797M674 529H706M756 575V619H843M843 565V726M781 619V715M746 693H777M847 693H878M927 741V589H1030V525M931 693H962M703 780V741H927M763 741V785M815 741V785M867 741V785M703 870V924H1018V812M763 874V910H1002V800M815 874V894H988V780H1153V826M867 877H973V763H1193V826M1058 762V733H1233V826M1002 798H1111V826M1018 809H1060V820M1080 567V605H1039V742M1039 666H1123V431H1148M1081 422H1104M1124 422H1148M1040 480H1081M976 514H1025M1040 508H1134M1164 375H1217M1155 384V412M1204 426H1238M1160 436V555M1166 570H1224V597M1234 613H1255V620M1176 440V484M1184 485H1208M1184 493H1208M1184 502H1208M1218 493H1236M1176 502V545M1043 693H1074`;
const tank = x => `<path class="g" d="M${x - 9.5} 797q9.500-8 19 0v64h-19zM${x - 9.5} 798h19M${x - 9.5} 852h19q-9.500 10-19 0M${x} 861v9M${x - 5} 870h10M${x - 5} 874h10"/>`;
const cells = (xs, y1, y2) => xs.map(x => `M${x} ${y1}V${y2}`).join('');
const CX = [821, 828, 836, 843, 850, 857, 864], SX = [750, 753, 757, 760, 764];
define('process-diagram', `
:host{display:block;position:absolute;inset:0}
svg{display:block;width:100%;height:100%}
.b{fill:none;stroke:#1a1a96;stroke-width:2.500}
.g{fill:none;stroke:#1fc42c;stroke-width:1.400}
.w{fill:#20262f;stroke:#e6e6e6;stroke-width:1.200}
.a{fill:#fff}
.y{fill:none;stroke:#d0d02a;stroke-width:1.500}
text{font:9px "Liberation Mono",monospace;fill:#f8f8f8;text-anchor:middle}
text.i{font-size:6px;font-weight:700;fill:#e4e430}
text.big{font-size:13px}
text.u{font:22px "Open Sans",sans-serif;font-weight:300;fill:#ddd}
text.wm{font:73px "Liberation Serif",serif;text-anchor:start;fill:#c3c5ca;stroke:#33373d;stroke-width:1;filter:drop-shadow(1px 1px 0 #9a9ca0)}
.wm .zh{font-family:"Noto Serif CJK SC","Noto Sans CJK SC",serif;font-size:77px;font-weight:300;stroke-width:2}
`, `<svg viewBox="192 214 1541 781" role="img" aria-label="Process flow drawing">
<path class="b" d="${PIPES}"/>
<path class="g" d="M815 505V342q28-20 56 0V505M815 356h56M815 392h56M815 395h56M815 422h56M815 449.500h56M815 476.500h56M815 424l56 25M871 424l-56 25M815 451l56 25M871 451l-56 25M815 478l56 27M871 478l-56 27${cells(CX, 357, 361)}${cells(CX, 366, 374)}${cells(CX, 381, 389)}"/>
<path class="g" d="M747 451h20v49h-20zM747 458h20${cells(SX, 459, 467)}${cells(SX, 470, 477)}${cells(SX, 480, 487)}${cells(SX, 490, 498)}"/>
<path class="g" d="M727 506H900M727 553H900M727 506q-20 23 0 47M730 506v47M876 506v47M876 506q30 23 0 47M900.500 502v54M705 524v10M708 524v10M705 530h12M756 553v8M751 562h10M751 566h10M837 553v6q0 7 6 7t6-7v-6M840 553v6q0 4 3 4t3-4v-6"/>
<path class="g" d="M1023 388h14v23h-14zM1028 411v90M1030.500 411v90M1033 411v90M1025 507q5-7 10 0v14q-5 7-10 0zM1025 508h10M1025 520h10"/>
<path class="g" d="M1148 416h56v20h-56zM1155 416v20M1194 416v20M1197 416v20M1200 416v20"/><path class="g" stroke-dasharray="5 3" d="M1156 420h38M1156 424h38M1156 428h38M1156 432h38"/><path class="g" d="M1164 417v19M1173 417v19M1182 417v19"/>
<rect class="g" x="1155" y="558" width="10" height="23" rx="2"/><path class="g" d="M1155 561h10M1155 578h10"/>
<rect class="g" x="1208" y="482" width="9" height="22" rx="2"/><path class="g" d="M1208 485h9M1208 501h9M1211 597h22v26h-22zM1211 602h22M1211 603h22"/>
<path class="g" d="M1042 823h38v31h-38zM1092 829h37v25h-37zM1141 831h25v23h-25zM1180 831h25v23h-25zM1220 831h25v23h-25z"/>
${[703, 763, 815, 867].map(x => tank(x) + valve(x, 763) + arrow(x, 789, 'd')).join('')}
${[[906, 274], [911, 439], [756, 597], [843, 592], [843, 649], [781, 649], [927, 632], [1039, 649], [1122, 462], [1176, 469], [1176, 517]].map(p => valve(...p)).join('')}
${[[717, 466], [717, 493], [901, 741], [1079, 733], [1079, 763], [1035, 779], [1035, 798], [1035, 809], [1060, 480], [1191, 375], [1189, 570]].map(p => valve(...p, 1)).join('')}
${meter(781, 693)}${meter(843, 693)}${meter(927, 693)}${meter(1039, 693)}
<path class="w" d="M956 353h12v6h-12zM955 353v6M969 353v6M960 358l2-3M790 306h5v5h-5z"/>
<circle class="w" cx="667" cy="466" r="3"/><circle class="w" cx="1219" cy="375" r="2.300"/>
${[[1108, 254, 'r'], [1112, 371, 'd'], [1143, 375, 'r'], [1168, 375, 'l'], [875, 356, 'l'], [921, 374, 'r'], [902, 392, 'r'], [1019, 396, 'r'], [911, 414, 'u'], [875, 457, 'l'], [703, 466, 'r'], [742, 466, 'r'], [683, 493, 'l'], [756, 571, 'u'], [843, 704, 'u'], [781, 715, 'd'], [927, 618, 'd'], [927, 736, 'd'], [703, 920, 'd'], [763, 905, 'd'], [815, 889, 'd'], [968, 877, 'r'], [983, 894, 'r'], [998, 910, 'r'], [1013, 924, 'r'], [973, 767, 'u'], [987, 783, 'u'], [1002, 802, 'u'], [1018, 814, 'u'], [1058, 737, 'u'], [1228, 733, 'r'], [1189, 763, 'r'], [1149, 779, 'r'], [1106, 798, 'r'], [1057, 809, 'r'], [1061, 820, 'd'], [1111, 825, 'd'], [1153, 827, 'd'], [1193, 827, 'd'], [1233, 827, 'd'], [1039, 610, 'u'], [1080, 570, 'u'], [1039, 704, 'u'], [1036, 480, 'l'], [1144, 431, 'r'], [1155, 411, 'd'], [1233, 426, 'r'], [1176, 439, 'u'], [1233, 493, 'r'], [1160, 553, 'd'], [1238, 544, 'd'], [1255, 623, 'd']].map(p => arrow(...p)).join('')}
${inst(717, 308, '', '.')}${inst(857, 292, 'PI', '02')}${inst(962, 314, 'FI', '201')}${inst(762, 392, 'TI', '03')}${inst(664, 529, 'LG', '04')}${inst(736, 693, 'FO', '01')}${inst(887, 693, 'FIC', '04')}${inst(971, 693, 'FO', '02')}${inst(1083, 693, 'FIC', '02')}${inst(966, 514, 'LS', '02')}${inst(1114, 422, 'TI', '01')}${inst(1144, 508, 'PI', '201')}
${pump(814, 619, 'l')}${pump(978, 589, 'l')}${pump(1080, 558, 'u')}${pump(1155, 375, 'u')}<circle class="y" cx="1175.500" cy="493" r="8"/>
<text class="wm" x="581" y="542"><tspan class="zh">莫西网</tspan>www.3dmox.com</text>
${[[897, 346, 'W-02'], [892, 482, 'K-01'], [934, 439, 'VA-12'], [755, 441, 'W-01'], [704, 476, 'VA-11'], [706, 504, 'VA-25'], [738, 597, 'VA-03'], [865, 592, 'VA-02'], [813, 636, 'P-01'], [761, 649, 'VA-04'], [865, 649, 'VA-01'], [783, 725, 'rest'], [847, 725, 'Stuff'], [948, 632, 'VA-13'], [955, 725, 'distilate'], [904, 728, 'VA-14'], [681, 763, 'VA-15'], [741, 763, 'VA-16'], [797, 763, 'VA-17'], [848, 763, 'VA-23'], [685, 882, 'MJ-1'], [747, 882, 'MJ-2'], [795, 882, 'MJ-3'], [977, 572, 'P-02'], [1058, 557, 'P-03'], [1019, 649, 'VA-05'], [1018, 740, 'water'], [1088, 722, 'VA-26'], [1088, 751, 'VA-24'], [1012, 770, 'VA-20'], [1014, 789, 'VA-19'], [1038, 818, 'VA-18'], [1058, 860, 'B-04'], [1110, 860, 'B-05'], [1153, 860, 'B-06'], [1193, 860, 'B-07'], [1232, 860, 'B-08'], [1011, 450, 'W-03'], [1060, 466, 'VA-10'], [1049, 513, 'B-02'], [1156, 360, 'PV-01'], [1195, 386, 'VA-09'], [1215, 365, 'steam'], [1179, 410, 'W-04'], [1141, 462, 'VA-06'], [1196, 468, 'VA-07'], [1195, 533, 'VA-08'], [1219, 511, 'VP-01'], [1273, 530, 'waste water'], [1138, 570, 'B-03'], [1188, 560, 'VA-21'], [1194, 617, 'B-04']].map(p => text(...p)).join('')}
<text class="big" x="807" y="536">B-01</text>
<path d="M212 973V911M212 973H275M207 967.500h12v12h-12z" fill="none" stroke="#ddd" stroke-width="1.300"/><text class="u" x="222" y="907">Y</text><text class="u" x="286" y="972">X</text>
</svg>`);

define('view-cube', `
:host{display:flex;flex-direction:column;align-items:center;width:164px}
.p{display:flex;position:relative;margin-top:15px}
.p svg{position:absolute;right:5px;top:7px}
select{width:57px;height:21px;border-radius:5px;background:#9c9da6;border:1px solid #7d7e88;color:#50515c;font:14px/18px "Liberation Sans",sans-serif;padding-left:4px}
text{font:bold 22px "Liberation Sans",sans-serif;fill:#b4b6bf;text-anchor:middle}
.t{font:bold 15px "Open Sans",sans-serif;fill:#4a4e55}
`, `<svg width="164" height="152" viewBox="-82 -72 164 152" role="img" aria-label="View cube"><circle r="58" fill="none" stroke="#444a52" stroke-width="15"/><path d="M-28-28h56v55h-56z" fill="#a9adac"/><path d="M-18-18h36v36h-36z" fill="#9da2a6"/><text class="t" y="6">TOP</text><text y="-53">N</text><text y="71">S</text><text x="-62" y="9">W</text><text x="62" y="9">E</text></svg><div class="p"><select aria-label="Coordinate system"><option>WCS</option></select><svg width="8" height="5" viewBox="0 0 8 5" aria-hidden="true"><path d="M1 1h6L4 4z" fill="none" stroke="#c8c9d2"/></svg></div>`);

define('command-line', `
:host{display:flex;width:520px;height:33px;border-radius:3px;overflow:hidden}
.k{flex:0 0 68px;background:linear-gradient(#747474,#505050);display:flex;align-items:center;gap:9px;padding-left:5px}
.k i{width:6px;height:22px;background:radial-gradient(#aaa 1px,transparent 1px) 0 0/3px 3px}
.f{flex:1;background:#bdbdbf;display:flex;align-items:center;padding:0 5px;gap:4px}
input{flex:1;padding-left:7px;font:italic 14px/20px "DejaVu Sans Mono","Liberation Mono",monospace;color:#444}
input::placeholder{color:#77777c;opacity:1}
.m{gap:4px}
`, `<div class="k"><i></i>${ib('x', 'Close', 10)}${ib('wrench', 'Customize', 17)}</div><div class="f"><button class="m" aria-label="Recent commands">${ic('prompt', 19)}<svg width="8" height="6" viewBox="0 0 8 6"><path d="M0 0h8L4 6z" fill="#666"/></svg></button><input aria-label="Command" placeholder="Type a command">${ib('up', 'History', 9)}</div>`);

define('drawing-canvas', `
:host{display:block;position:relative;background:#20262f;overflow:hidden;height:100%}
.vp{position:absolute;left:4px;top:6px;color:#e4e4e4;white-space:nowrap;z-index:1}
.wc{position:absolute;right:12px;top:10px;display:flex;gap:10px;z-index:1}
.wc svg{display:block}
view-cube{position:absolute;right:10px;top:47px}
command-line{position:absolute;left:50%;bottom:1px;margin-left:-261px}
`, `<process-diagram></process-diagram><div class="vp">[−][Top][2D Wireframe]</div>
<div class="wc"><button aria-label="Minimize viewport"><svg width="14" height="14"><path d="M1 10.500h12" stroke="#fff" stroke-width="4"/></svg></button><button aria-label="Restore viewport"><svg width="14" height="14"><path d="M2 5h7v7H2zM5 4V2h7v8h-2" fill="none" stroke="#fff" stroke-width="1.800"/></svg></button><button aria-label="Close viewport"><svg width="14" height="14"><path d="m2 2 9 10M11 2 2 12" stroke="#fff" stroke-width="3"/></svg></button></div>
<view-cube></view-cube><command-line></command-line>`);

/* ---------- bottom row ---------- */
const G = (w, s) => `<div class="g" style="width:${w}px">${s}</div>`;
define('status-row', `
:host{display:flex;height:33px;background:#373737;justify-content:space-between}
.tabs{display:flex;padding:1px 0 0 12px;color:#b4b4b4}
.tabs button{height:22px;clip-path:polygon(0 0,100% 0,calc(100% - 10px) 85%,calc(100% - 16px) 100%,16px 100%,10px 85%);background:#525252;padding:0 20px 0 14px;white-space:nowrap}
.tabs .m{background:linear-gradient(#606060,#7c7c7c);color:#fff;font-weight:700;width:76px;padding:0}
.tabs .p{width:30px;padding:0;margin-left:3px;clip-path:polygon(20% 0,100% 0,82% 100%,0 100%)}
.st{display:flex;background:#4c4c4c;border:1px solid #8c8c8c;height:33px}
.g{display:flex;align-items:center;justify-content:space-around;border-right:1px solid #7e7e7e;color:#f4f4f4}
.g:last-child{border:0}
.n{gap:5px;white-space:nowrap}
`, `<div class="tabs"><button class="m">Model</button><button>PID ISO A1 Title Block</button><button class="p" aria-label="New layout">${ic('plus', 11)}</button></div>
<div class="st">${G(61, '<button>MODEL</button>')}${G(81, ib('grid', 'Grid', 19) + ib('dots', 'Snap', 18) + ib('caret', 'Snap settings', 8))}${G(131, ib('ortho', 'Ortho', 18) + ib('polar', 'Polar tracking', 20) + ib('caret', 'Polar settings', 8) + ib('isod', 'Isometric drafting', 20) + ib('caret', 'Isoplane', 8))}${G(80, ib('otrack', 'Object tracking', 20) + ib('osnap', 'Object snap', 21) + ib('caret', 'Snap modes', 8))}${G(134, ib('annB', 'Annotation visibility', 20) + ib('annP', 'Auto scale', 20) + ib('ann', 'Annotation scale', 20) + `<button class="n">1:1${ic('caret', 8)}</button>`)}${G(51, ib('gear', 'Workspace', 19) + ib('caret', 'Workspaces', 8))}${G(31, ib('plusL', 'Annotation monitor', 18))}${G(34, ib('shapes', 'Isolate objects', 20))}${G(35, ib('blue', 'Hardware acceleration', 22))}${G(65, ib('sync', 'Standards', 19) + ib('graph', 'Graphics', 24))}${G(61, ib('full', 'Clean screen', 20) + ib('menu', 'Customization', 19))}</div>`);

define('cad-app', `
:host{display:grid;grid-template-rows:auto auto auto minmax(0,1fr) auto 5px;height:100vh}
main{display:grid;grid-template-columns:192px minmax(0,1fr) 187px;grid-template-rows:minmax(0,1fr);background:#5b5b5b}
.cv{padding-top:5px;min-width:0}
.os{background:#1c1b1b;display:flex;padding:2px 0 0 60px}
.os i{width:430px;height:3px;background:#f2f2f2}
`, `<cad-header></cad-header><cad-ribbon></cad-ribbon><file-tabs></file-tabs>
<main><project-manager></project-manager><div class="cv"><drawing-canvas></drawing-canvas></div><tool-palettes></tool-palettes></main>
<status-row></status-row><div class="os"><i></i></div>`);
</script>
</body>
</html>
